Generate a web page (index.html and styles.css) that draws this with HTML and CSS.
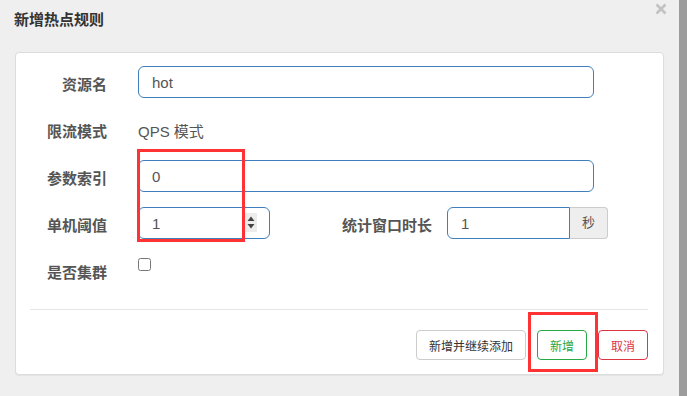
FILE: index.html
```html
<!DOCTYPE html>
<html lang="zh-CN">
<head>
    <meta charset="UTF-8">
    <title>新增热点规则</title>
    <link rel="stylesheet" href="styles.css">
</head>
<body>
    <div class="main">
        <div class="header">
            <span class="title">新增热点规则</span>
            <span class="close">
                <svg width="12" height="12" viewBox="0 0 12 12"><path d="M1.5 1.5 L10.5 10.5 M10.5 1.5 L1.5 10.5" stroke="#c2c2c2" stroke-width="2.6" fill="none"/></svg>
            </span>
        </div>

        <div class="card">
            <div class="row">
                <label class="label">资源名</label>
                <input class="control wide" type="text" value="hot">
            </div>
            <div class="row">
                <label class="label">限流模式</label>
                <span class="static">QPS 模式</span>
            </div>
            <div class="row">
                <label class="label">参数索引</label>
                <input class="control wide" type="text" value="0">
            </div>
            <div class="row">
                <label class="label">单机阈值</label>
                <div class="number">
                    <input class="control" type="text" value="1">
                    <span class="spin">
                        <svg width="12" height="19" viewBox="0 0 12 19"><path d="M2.5 8 L6 3.5 L9.5 8 Z M2.5 11 L6 15.5 L9.5 11 Z" fill="#444"/></svg>
                    </span>
                </div>
                <label class="label label-win">统计窗口时长</label>
                <div class="group">
                    <input class="control" type="text" value="1">
                    <span class="addon">秒</span>
                </div>
            </div>
            <div class="row">
                <label class="label">是否集群</label>
                <input class="check" type="checkbox">
            </div>

            <hr class="divider">

            <div class="footer">
                <button class="btn">新增并继续添加</button>
                <button class="btn btn-ok">新增</button>
                <button class="btn btn-cancel">取消</button>
            </div>
        </div>
    </div>
    <div class="strip"></div>

    <div class="mark mark-a"></div>
    <div class="mark mark-b"></div>
</body>
</html>
```

FILE: styles.css
```css
body {
    margin: 0;
    width: 687px;
    height: 396px;
    display: flex;
    background: #efefef;
    font-family: "Liberation Sans", "Noto Sans CJK SC", sans-serif;
    color: #555;
    overflow: hidden;
    position: relative;
}
.main {
    width: 679px;
}
.strip {
    width: 8px;
    background: #9c9c9c;
}
.header {
    height: 52px;
    display: flex;
    justify-content: space-between;
    padding: 0 12px 0 14px;
    box-sizing: border-box;
}
.title {
    margin-top: 11px;
    font-size: 15px;
    line-height: 18px;
    font-weight: bold;
    color: #333;
}
.close {
    margin-top: 3px;
    height: 12px;
}
.close svg { display: block; }
.card {
    margin-left: 15px;
    width: 649px;
    height: 323px;
    box-sizing: border-box;
    background: white;
    border: 1px solid #dcdcdc;
    border-radius: 4px;
    box-shadow: 0 1px 1px rgba(0,0,0,0.05);
    padding: 13px 15px 0 14px;
}
.row {
    display: flex;
    align-items: flex-start;
    height: 32px;
    margin-bottom: 15px;
}
.label {
    width: 77px;
    margin-right: 31px;
    padding-top: 3px;
    text-align: right;
    font-size: 15px;
    line-height: 32px;
    font-weight: bold;
    color: #555;
}
.static {
    padding-top: 3px;
    font-size: 15px;
    line-height: 32px;
}
.control {
    height: 32px;
    box-sizing: border-box;
    padding: 0 13px;
    border: 1px solid #3f7fbd;
    border-radius: 6px;
    font-family: inherit;
    font-size: 15px;
    color: #555;
    outline: none;
    background: white;
}
.wide { width: 456px; }
.number {
    position: relative;
    width: 132px;
}
.number .control { width: 100%; }
.spin {
    position: absolute;
    right: 13px;
    top: 6px;
    width: 12px;
    height: 19px;
    background: #ececec;
}
.spin svg { display: block; }
.label-win {
    width: 162px;
    margin-right: 15px;
}
.group {
    display: flex;
    width: 161px;
}
.group .control {
    width: 123px;
    border-radius: 6px 0 0 6px;
}
.addon {
    width: 38px;
    height: 32px;
    box-sizing: border-box;
    border: 1px solid #ccc;
    border-left: none;
    border-radius: 0 4px 4px 0;
    background: #eee;
    text-align: center;
    font-size: 13px;
    line-height: 30px;
    color: #555;
}
.check {
    margin: 4px 0 0 0;
    width: 13px;
    height: 13px;
}
.divider {
    margin: 23px 0 0 0;
    border: none;
    border-top: 1px solid #e5e5e5;
}
.footer {
    display: flex;
    justify-content: flex-end;
    gap: 11px;
    margin-top: 20px;
}
.btn {
    height: 30px;
    padding: 0 12px;
    background: white;
    border: 1px solid #ccc;
    border-radius: 4px;
    font-family: inherit;
    font-size: 12px;
    color: #333;
}
.btn-ok { border-color: #28a745; color: #28a745; }
.btn-cancel { border-color: #dc3545; color: #dc3545; }

/* red highlight boxes drawn over the screenshot */
.mark {
    position: absolute;
    border: 3px solid #ff3333;
    box-sizing: border-box;
}
.mark-a { left: 137px; top: 149px; width: 108px; height: 93px; }
.mark-b { left: 528px; top: 312px; width: 70px; height: 60px; }
```
